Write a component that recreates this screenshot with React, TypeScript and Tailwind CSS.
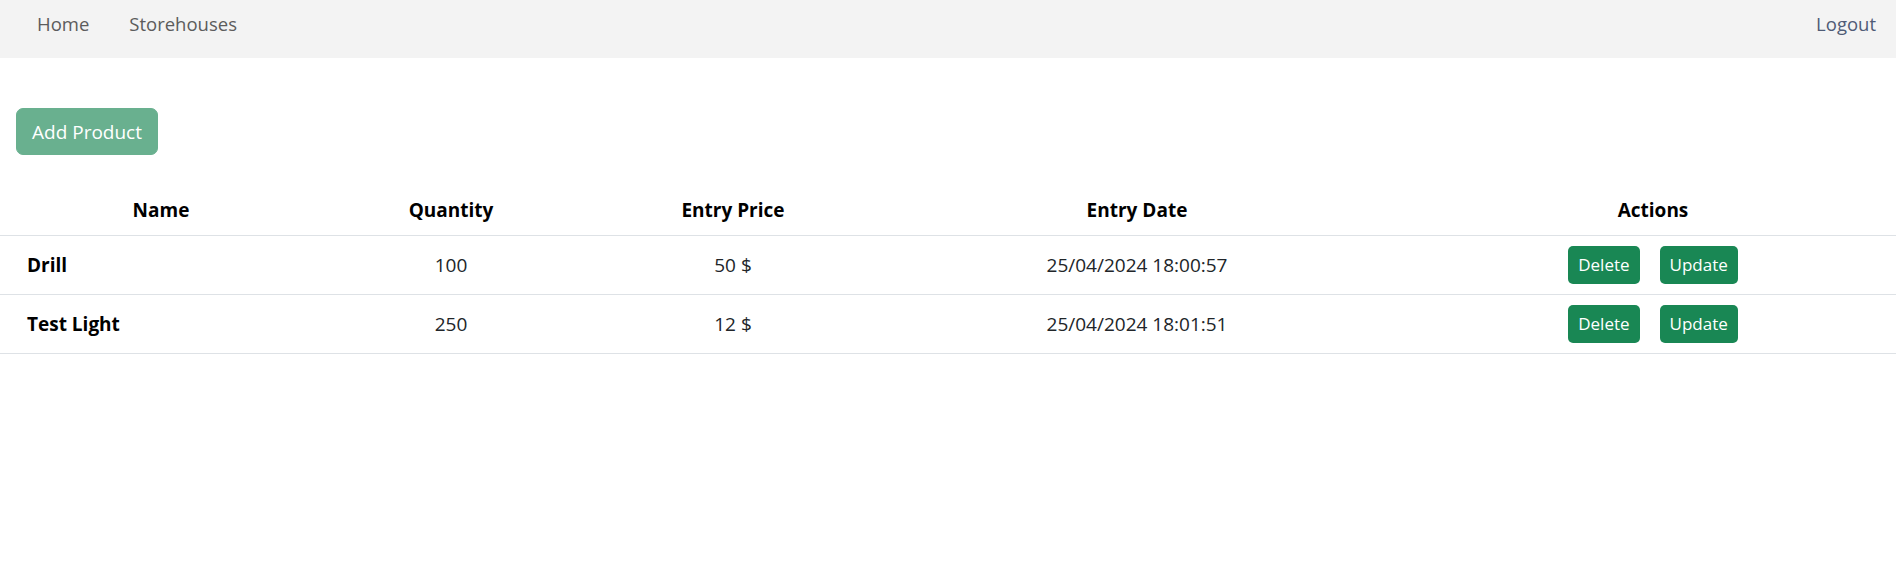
import { Fragment } from "react";

const products = [
  { name: "Drill", quantity: 100, price: "50 $", date: "25/04/2024 18:00:57" },
  { name: "Test Light", quantity: 250, price: "12 $", date: "25/04/2024 18:01:51" },
];

const cols = "grid grid-cols-[322px_258px_306px_502px_1fr]";

export default function App() {
  return (
    <div className="min-h-screen bg-white font-['Segoe_UI','Open_Sans',sans-serif] text-[19px] leading-[30px] text-[#212529]">
      <nav className="flex h-[58px] items-start justify-between bg-[#f3f3f3] pl-[37px] pr-[20px] pt-[9px] text-[18.5px]">
        <div className="flex items-center gap-[40px] text-[#5c5c5c]">
          <a href="#">Home</a>
          <a href="#">Storehouses</a>
        </div>
        <a href="#" className="text-[#4f5b76]">
          Logout
        </a>
      </nav>

      <div className="pl-[16px] pt-[50px]">
        <button className="h-[47px] rounded-[7px] border border-[#69b08f] bg-[#69b08f] px-[15px] text-white">
          Add Product
        </button>
      </div>

      <div className="mt-[30px]">
        <div className={`${cols} h-[51px] items-center border-b border-[#dee2e6] font-bold text-black`}>
          <div className="text-center">Name</div>
          <div className="text-center">Quantity</div>
          <div className="text-center">Entry Price</div>
          <div className="text-center">Entry Date</div>
          <div className="pl-[22px] text-center">Actions</div>
        </div>
        {products.map((p) => (
          <Fragment key={p.name}>
            <div className={`${cols} h-[59px] items-center border-b border-[#dee2e6]`}>
              <div className="pl-[27px] font-bold text-black">{p.name}</div>
              <div className="text-center">{p.quantity}</div>
              <div className="text-center">{p.price}</div>
              <div className="text-center">{p.date}</div>
              <div className="flex justify-center gap-[20px] pl-[22px]">
                <button className="h-[38px] rounded-[5px] bg-[#198754] px-[10px] text-[17px] leading-[26px] text-white">
                  Delete
                </button>
                <button className="h-[38px] rounded-[5px] bg-[#198754] px-[10px] text-[17px] leading-[26px] text-white">
                  Update
                </button>
              </div>
            </div>
          </Fragment>
        ))}
      </div>
    </div>
  );
}
